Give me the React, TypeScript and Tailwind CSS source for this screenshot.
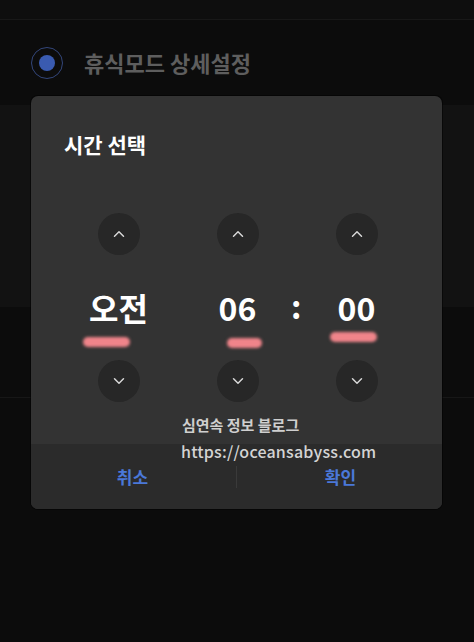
import React from 'react';
import { ChevronUp, ChevronDown } from 'lucide-react';

const font = { fontFamily: '"Noto Sans CJK KR", "Noto Sans", sans-serif' };

interface ColumnProps {
  value: string;
}

function StepButton({ up }: { up: boolean }) {
  return (
    <div className="flex h-[42px] w-[42px] items-center justify-center rounded-full bg-[#272727]">
      {up ? (
        <ChevronUp size={18} strokeWidth={2} className="text-[#d6d6d6]" />
      ) : (
        <ChevronDown size={18} strokeWidth={2} className="text-[#d6d6d6]" />
      )}
    </div>
  );
}

function Column({ value }: ColumnProps) {
  return (
    <div className="flex w-[119px] flex-col items-center">
      <StepButton up />
      <div className="flex h-[105px] items-center justify-center pb-px text-[32px] font-bold leading-none text-white">
        {value}
      </div>
      <StepButton up={false} />
    </div>
  );
}

export default function App() {
  return (
    <div className="relative h-[642px] w-[474px] overflow-hidden bg-[#0c0c0c]" style={font}>
      {/* page behind the dialog */}
      <div className="h-[20px] border-b border-[#181818] bg-[#0e0e0e]" />
      <div className="flex h-[85px] items-center pl-[31px]">
        <div className="flex h-[32px] w-[32px] items-center justify-center rounded-full border border-[#33467a]">
          <div className="h-[16px] w-[16px] rounded-full bg-[#3a5bb0]" />
        </div>
        <span className="ml-[21px] text-[22px] font-bold text-[#5e5e5e]">휴식모드 상세설정</span>
      </div>
      <div className="h-[202px] bg-[#121212]" />
      <div className="h-[91px] border-b border-[#171717] bg-[#0c0c0c]" />

      {/* dialog */}
      <div className="absolute left-[31px] top-[96px] flex h-[413px] w-[411px] flex-col overflow-hidden rounded-[7px] bg-[#333333] shadow-[0_0_0_1px_rgba(0,0,0,0.5)]">
        <div className="pl-[33px] pt-[34px] text-[21px] font-bold leading-[28px] text-white">시간 선택</div>

        <div className="mt-[55px] flex pl-[28px]">
          <Column value="오전" />
          <Column value="06" />
          <div className="relative w-0">
            <span className="absolute left-[-6px] top-[76px] text-[32px] font-bold leading-none text-white">:</span>
          </div>
          <Column value="00" />
        </div>

        <div className="mt-auto flex h-[65px] items-center bg-[#2b2b2b]">
          <button className="flex-1 pr-[2px] text-[17px] font-bold text-[#4a78d8]">취소</button>
          <div className="h-[22px] w-px bg-[#3a3a3a]" />
          <button className="flex-1 pl-[2px] text-[17px] font-bold text-[#4a78d8]">확인</button>
        </div>

        {/* redaction marks */}
        <div className="absolute left-[52px] top-[241px] h-[10px] w-[47px] rounded-full bg-[#f0848a] blur-[1.5px]" />
        <div className="absolute left-[196px] top-[242px] h-[10px] w-[35px] rounded-full bg-[#f0848a] blur-[1.5px]" />
        <div className="absolute left-[299px] top-[236px] h-[10px] w-[47px] rounded-full bg-[#f0848a] blur-[1.5px]" />

        {/* watermark */}
        <div className="absolute left-[151px] top-[318px] text-[15px] font-bold leading-[22px] text-[#cfcfcf]">
          심연속 정보 블로그
        </div>
        <div className="absolute left-[150px] top-[344px] text-[16px] font-medium leading-[22px] tracking-[0.2px] text-[#d4d4d4]">
          https://oceansabyss.com
        </div>
      </div>
    </div>
  );
}
